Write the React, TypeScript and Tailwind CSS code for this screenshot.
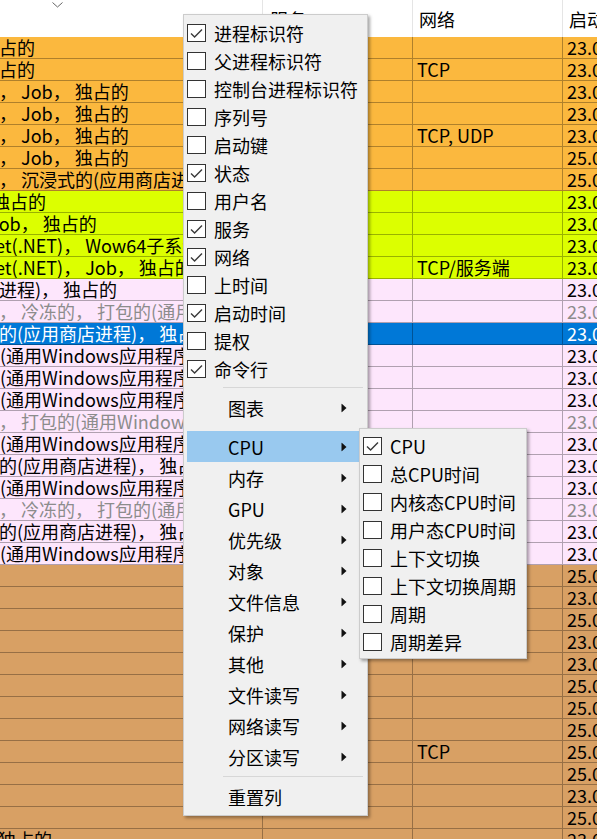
import React from 'react';

type Row = {
  kind: 'orange' | 'lime' | 'pink' | 'brown' | 'sel';
  c1?: string;
  off?: string;
  c3?: string;
  c4: string;
  dim?: boolean;
};

const rowBg: Record<Row['kind'], string> = {
  orange: 'bg-[#fbb83e]',
  lime: 'bg-[#dcff00]',
  pink: 'bg-[#fde6fc]',
  brown: 'bg-[#d8a064]',
  sel: 'bg-[#0078d7]',
};

const JOB = '， Job， 独占的';
const UWP = '(通用Windows应用程序)， 独占的';
const STORE = '的(应用商店进程)， 独占的';

const rows: Row[] = [
  { kind: 'orange', c1: '独占的', off: '-ml-[19px]', c4: '23.03' },
  { kind: 'orange', c1: '独占的', off: '-ml-[19px]', c3: 'TCP', c4: '23.03' },
  { kind: 'orange', c1: JOB, off: '-ml-[1px]', c4: '23.03' },
  { kind: 'orange', c1: JOB, off: '-ml-[1px]', c4: '23.03' },
  { kind: 'orange', c1: JOB, off: '-ml-[1px]', c3: 'TCP, UDP', c4: '23.03' },
  { kind: 'orange', c1: JOB, off: '-ml-[1px]', c4: '25.03' },
  { kind: 'orange', c1: '， 沉浸式的(应用商店进程)， 独占的', off: '-ml-[1px]', c4: '25.03' },
  { kind: 'lime', c1: '， 独占的', off: '-ml-[30px]', c4: '23.03' },
  { kind: 'lime', c1: 'Job， 独占的', off: '-ml-[11px]', c4: '23.03' },
  { kind: 'lime', c1: 'Net(.NET)， Wow64子系统', off: '-ml-[18px]', c4: '23.03' },
  { kind: 'lime', c1: 'Net(.NET)， Job， 独占的', off: '-ml-[18px]', c3: 'TCP/服务端', c4: '23.03' },
  { kind: 'pink', c1: '进程)， 独占的', off: '-ml-[1px]', c4: '23.03' },
  { kind: 'pink', c1: '， 冷冻的， 打包的(通用Windows应用程序)', off: '-ml-[1px]', c4: '23.03', dim: true },
  { kind: 'sel', c1: STORE, off: '-ml-[1px]', c4: '23.03' },
  { kind: 'pink', c1: UWP, c4: '23.03' },
  { kind: 'pink', c1: UWP, c4: '23.03' },
  { kind: 'pink', c1: UWP, c4: '23.03' },
  { kind: 'pink', c1: '， 打包的(通用Windows应用程序)', off: '-ml-[1px]', c4: '23.03', dim: true },
  { kind: 'pink', c1: UWP, c4: '23.03' },
  { kind: 'pink', c1: STORE, off: '-ml-[1px]', c4: '23.03' },
  { kind: 'pink', c1: UWP, c4: '23.03' },
  { kind: 'pink', c1: '， 冷冻的， 打包的(通用Windows应用程序)', off: '-ml-[1px]', c4: '23.03', dim: true },
  { kind: 'pink', c1: STORE, off: '-ml-[1px]', c4: '23.03' },
  { kind: 'pink', c1: UWP, c4: '23.03' },
  { kind: 'brown', c4: '25.03' },
  { kind: 'brown', c4: '23.03' },
  { kind: 'brown', c4: '25.03' },
  { kind: 'brown', c4: '23.03' },
  { kind: 'brown', c4: '23.03' },
  { kind: 'brown', c4: '25.03' },
  { kind: 'brown', c4: '25.03' },
  { kind: 'brown', c4: '25.03' },
  { kind: 'brown', c3: 'TCP', c4: '25.03' },
  { kind: 'brown', c4: '25.03' },
  { kind: 'brown', c4: '23.03' },
  { kind: 'brown', c4: '25.03' },
  { kind: 'brown', c1: '独占的', off: '-ml-[2px]', c4: '23.03' },
];

const mainChecks: [string, boolean][] = [
  ['进程标识符', true],
  ['父进程标识符', false],
  ['控制台进程标识符', false],
  ['序列号', false],
  ['启动键', false],
  ['状态', true],
  ['用户名', false],
  ['服务', true],
  ['网络', true],
  ['上时间', false],
  ['启动时间', true],
  ['提权', false],
  ['命令行', true],
];

const groups = ['内存', 'GPU', '优先级', '对象', '文件信息', '保护', '其他', '文件读写', '网络读写', '分区读写'];

const cpuChecks: [string, boolean][] = [
  ['CPU', true],
  ['总CPU时间', false],
  ['内核态CPU时间', false],
  ['用户态CPU时间', false],
  ['上下文切换', false],
  ['上下文切换周期', false],
  ['周期', false],
  ['周期差异', false],
];

function CheckBox({ on }: { on: boolean }) {
  return (
    <div className="w-[19px] h-[18px] border border-[#333333] bg-white flex items-center justify-center shrink-0">
      {on && (
        <svg width="15" height="13" viewBox="0 0 15 13">
          <path d="M2 6.5 L5.6 10 L13 2.5" fill="none" stroke="#3a3a3a" strokeWidth="1.4" />
        </svg>
      )}
    </div>
  );
}

function Arrow() {
  return (
    <svg width="6" height="9" viewBox="0 0 6 9" className="absolute right-[17px] top-1/2 -translate-y-1/2">
      <path d="M0.5 0 L5.5 4.5 L0.5 9 Z" fill="#111" />
    </svg>
  );
}

function CheckItem({ label, on }: { label: string; on: boolean }) {
  return (
    <div className="h-[28px] flex items-center pl-[3px] gap-[8px]">
      <CheckBox on={on} />
      <span className="leading-[22px] whitespace-nowrap">{label}</span>
    </div>
  );
}

function SubItem({ label, hot }: { label: string; hot?: boolean }) {
  return (
    <div className={`relative h-[31px] mx-[3px] flex items-center pl-[41px] ${hot ? 'bg-[#99c9ef]' : ''}`}>
      <span className="leading-[22px] whitespace-nowrap">{label}</span>
      <Arrow />
    </div>
  );
}

function Separator() {
  return (
    <div className="h-[9px] flex items-center pl-[39px] pr-[4px]">
      <div className="h-px w-full bg-[#d7d7d7]" />
    </div>
  );
}

export default function App() {
  return (
    <div className="relative w-[597px] h-[839px] overflow-hidden bg-white text-[18px] text-black font-['Noto_Sans_CJK_SC','Noto_Sans',sans-serif]">
      {/* header */}
      <div className="relative h-[37px] flex bg-white overflow-hidden">
        <div className="w-[263px] shrink-0 border-r border-[#e5e5e5]" />
        <div className="w-[150px] shrink-0 border-r border-[#e5e5e5] pl-[7px] leading-[38px]">服务</div>
        <div className="w-[150px] shrink-0 border-r border-[#e5e5e5] pl-[6px] leading-[38px]">网络</div>
        <div className="flex-1 min-w-0 pl-[6px] leading-[38px] whitespace-nowrap">启动时间</div>
        <svg width="11" height="6" viewBox="0 0 11 6" className="absolute left-[52px] top-[2px]">
          <path d="M0.5 0.5 L5.5 5 L10.5 0.5" fill="none" stroke="#666" strokeWidth="1" />
        </svg>
      </div>

      {/* rows */}
      <div className="flex flex-col">
        {rows.map((r, i) => {
          const txt = r.kind === 'sel' ? 'text-white' : r.dim ? 'text-[#8c8c8c]' : 'text-black';
          return (
            <div key={i} className={`h-[22px] flex border-b border-black/30 ${rowBg[r.kind]} ${txt}`}>
              <div className="w-[263px] shrink-0 border-r border-black/30 overflow-hidden whitespace-nowrap leading-[21px]">
                <span className={`block ${r.off ?? ''}`}>{r.c1 ?? ''}</span>
              </div>
              <div className="w-[150px] shrink-0 border-r border-black/30" />
              <div className="w-[150px] shrink-0 border-r border-black/30 pl-[4px] leading-[21px] whitespace-nowrap overflow-hidden">{r.c3 ?? ''}</div>
              <div className="flex-1 min-w-0 pl-[4px] leading-[21px] whitespace-nowrap overflow-hidden">{r.c4}.06 08:12:44</div>
            </div>
          );
        })}
      </div>

      {/* column context menu */}
      <div className="absolute left-[183px] top-[14px] w-[185px] bg-[#f0f0f0] border border-[#cccccc] shadow-[2px_2px_3px_rgba(0,0,0,0.35)] pt-[4px] pb-[3px]">
        {mainChecks.map(([l, on]) => (
          <CheckItem key={l} label={l} on={on} />
        ))}
        <Separator />
        <SubItem label="图表" />
        <div className="h-[8px]" />
        <SubItem label="CPU" hot />
        {groups.map((g) => (
          <SubItem key={g} label={g} />
        ))}
        <Separator />
        <div className="h-[31px] mx-[3px] flex items-center pl-[41px]">
          <span className="leading-[22px]">重置列</span>
        </div>
      </div>

      {/* CPU submenu */}
      <div className="absolute left-[359px] top-[428px] w-[168px] bg-[#f0f0f0] border border-[#cccccc] shadow-[2px_2px_3px_rgba(0,0,0,0.35)] pt-[3px] pb-[2px]">
        {cpuChecks.map(([l, on]) => (
          <CheckItem key={l} label={l} on={on} />
        ))}
      </div>
    </div>
  );
}
